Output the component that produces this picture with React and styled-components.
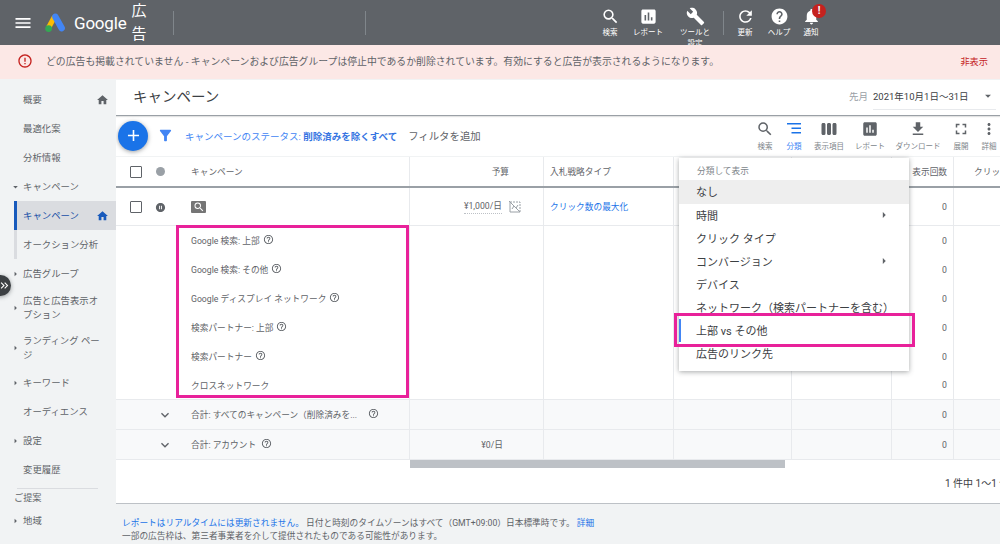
import styled, { createGlobalStyle } from 'styled-components';
import {
  MdMenu, MdSearch, MdAssessment, MdBuild, MdRefresh, MdHelp, MdNotifications, MdErrorOutline,
  MdHome, MdArrowRight, MdArrowDropDown, MdAdd, MdFilterAlt, MdViewWeek,
  MdFileDownload, MdFullscreen, MdMoreVert, MdExpandMore, MdHelpOutline, MdPauseCircleFilled,
  MdKeyboardDoubleArrowRight,
} from 'react-icons/md';

const GlobalStyle = createGlobalStyle`
  html, body {
    margin: 0;
    padding: 0;
    width: 1000px;
    height: 544px;
    overflow: hidden;
    background: #fff;
  }
  * { box-sizing: border-box; }
  body {
    font-family: Roboto, "Noto Sans CJK JP", sans-serif;
    color: #5f6368;
  }
`;

const Page = styled.div`
  width: 1000px;
  height: 544px;
  display: flex;
  flex-direction: column;
  overflow: hidden;
`;

const TopBar = styled.header`
  height: 45px;
  flex: none;
  background: #5f6368;
  color: #fff;
  display: flex;
  align-items: center;
`;

const MenuButton = styled.div`
  width: 44px;
  padding-left: 13px;
  display: flex;
  font-size: 20px;
`;

const Brand = styled.div`
  width: 129px;
  display: flex;
  align-items: center;
`;

const BrandName = styled.span`
  font-size: 17px;
  margin-left: 8px;
  letter-spacing: -0.2px;
`;

const BrandSub = styled.span`
  width: 16px;
  margin-left: 5px;
  padding-top: 1px;
  font-size: 15px;
  line-height: 23px;
`;

const BarDivider = styled.span`
  width: 1px;
  height: 24px;
  flex: none;
  background: #80868b;
`;

const BarGap = styled.div`
  width: ${p => p.$w}px;
  flex: none;
`;

const BarTool = styled.div`
  width: ${p => p.$w}px;
  height: 45px;
  flex: none;
  padding-top: 7px;
  display: flex;
  flex-direction: column;
  align-items: center;
  position: relative;
  font-size: 7.5px;
  line-height: 11px;
  text-align: center;
  svg { font-size: 19px; margin-bottom: 1px; flex: none; }
`;

const Badge = styled.span`
  position: absolute;
  top: 4px;
  right: 0;
  width: 14px;
  height: 14px;
  border-radius: 50%;
  background: #c5221f;
  font-size: 10px;
  line-height: 14px;
  font-weight: 700;
`;

const AlertBar = styled.div`
  height: 35px;
  flex: none;
  background: #fce8e6;
  border-bottom: 1px solid #f1f3f4;
  display: flex;
  align-items: center;
  padding: 0 12px 2px 17px;
  font-size: 9.85px;
  position: relative;
  svg { font-size: 16px; color: #c5221f; margin-right: 13px; }
`;

const AlertText = styled.span`
  flex: 1;
`;

const AlertAction = styled.span`
  font-size: 9.2px;
  color: #c5221f;
`;

const Body = styled.div`
  flex: 1;
  min-height: 0;
  display: flex;
  position: relative;
`;

const Sidebar = styled.nav`
  width: 116px;
  flex: none;
  background: #f1f3f4;
  padding-top: 5px;
  font-size: 9.4px;
`;

const NavItem = styled.div`
  min-height: ${p => (p.$tall ? 40 : 29)}px;
  margin-left: ${p => (p.$sub ? 14 : 0)}px;
  padding-left: ${p => (p.$sub ? 9 : 23)}px;
  padding-right: ${p => (p.$sub ? 4 : 14)}px;
  display: flex;
  align-items: center;
  position: relative;
  line-height: 14px;
  color: ${p => (p.$active ? '#174ea6' : '#5f6368')};
  background: ${p => (p.$active ? '#dadce0' : 'transparent')};
  box-shadow: ${p => (p.$active ? 'inset 3px 0 #185abc' : p.$sub ? 'inset 3px 0 #dadce0' : 'none')};
`;

const NavCaret = styled.span`
  position: absolute;
  left: 10px;
  top: 50%;
  transform: translateY(-50%);
  display: flex;
  font-size: 11px;
`;

const NavHome = styled.span`
  position: absolute;
  right: 7px;
  top: 50%;
  transform: translateY(-50%);
  display: flex;
  font-size: 13px;
  color: ${p => (p.$active ? '#185abc' : '#5f6368')};
`;

const NavRule = styled.div`
  height: 1px;
  margin: 4px 18px 0 17px;
  background: #dadce0;
`;

const NavHeading = styled.div`
  padding: 2px 0 0 14px;
  height: 17px;
  font-size: 9.2px;
  line-height: 13px;
`;

const Expander = styled.div`
  position: absolute;
  left: -10px;
  top: 195px;
  width: 21px;
  height: 21px;
  border-radius: 50%;
  background: #3c4043;
  color: #fff;
  display: flex;
  align-items: center;
  justify-content: flex-end;
  font-size: 13px;
  box-shadow: 0 1px 4px rgba(60, 64, 67, 0.5);
  z-index: 5;
`;

const Main = styled.main`
  flex: 1;
  min-width: 0;
  display: flex;
  flex-direction: column;
  position: relative;
  overflow: hidden;
`;

const TitleBar = styled.div`
  height: 36px;
  flex: none;
  display: flex;
  align-items: flex-start;
  padding: 0 4px 0 17px;
  border-bottom: 1px solid #9aa0a6;
  box-shadow: 0 1px 1px rgba(60, 64, 67, 0.15);
`;

const Title = styled.h1`
  flex: 1;
  margin: 0;
  font-size: 14.5px;
  line-height: 36px;
  font-weight: 400;
  color: #3c4043;
`;

const DateRange = styled.div`
  width: 147px;
  height: 30px;
  position: relative;
  display: flex;
  align-items: center;
  padding-top: 1px;
  font-size: 9.5px;
  color: #3c4043;
  svg { font-size: 14px; color: #5f6368; margin-left: auto; margin-right: 1px; }
`;

const DateLabel = styled.span`
  color: #9aa0a6;
  margin-right: 5px;
`;

const DateUnderline = styled.span`
  position: absolute;
  left: 24px;
  right: 0;
  bottom: 0;
  height: 1px;
  background: #e8eaed;
`;

const Toolbar = styled.div`
  height: 40px;
  flex: none;
  display: flex;
  align-items: center;
  padding-bottom: 1px;
  font-size: 9.5px;
  position: relative;
`;

const AddButton = styled.div`
  width: 30px;
  height: 30px;
  margin: 0 0 0 2px;
  border-radius: 50%;
  background: #1a73e8;
  color: #fff;
  display: flex;
  align-items: center;
  justify-content: center;
  font-size: 19px;
  box-shadow: 0 1px 4px rgba(60, 64, 67, 0.5);
`;

const FilterIcon = styled.span`
  display: flex;
  margin-left: 9px;
  color: #4285f4;
  font-size: 17px;
`;

const FilterText = styled.span`
  margin-left: 11px;
  color: #4285f4;
  b { font-weight: 700; color: #3574e2; }
`;

const AddFilter = styled.span`
  margin-left: 11px;
  font-size: 10.4px;
  color: #5f6368;
`;

const ToolGroup = styled.div`
  margin-left: auto;
  margin-right: -2px;
  height: 40px;
  align-self: flex-start;
  display: flex;
`;

const Tool = styled.div`
  width: ${p => p.$w}px;
  display: flex;
  flex-direction: column;
  align-items: center;
  padding-top: 4px;
  white-space: nowrap;
  font-size: 7.5px;
  color: ${p => (p.$on ? '#4285f4' : '#80868b')};
  svg {
    font-size: 18px;
    margin-bottom: 2px;
    color: ${p => (p.$on ? '#1a73e8' : '#5f6368')};
  }
`;

const Table = styled.div`
  flex: none;
  border-top: 1px solid #f1f3f4;
  font-size: 8.7px;
`;

const Row = styled.div`
  height: ${p => p.$h}px;
  display: grid;
  grid-template-columns: 294px 134px 130px 118px 100px 62px 46px;
  background: ${p => (p.$total ? '#f8f9fa' : '#fff')};
  border-bottom: ${p => (p.$strong ? '2px solid #9aa0a6' : p.$plain ? 'none' : '1px solid #e8eaed')};
`;

const Cell = styled.div`
  display: flex;
  align-items: center;
  justify-content: ${p => (p.$right ? 'flex-end' : 'flex-start')};
  padding: 0 ${p => p.$pr ?? 0}px 0 ${p => p.$pl ?? 0}px;
  border-right: ${p => (p.$last ? 'none' : '1px solid #e8eaed')};
  white-space: nowrap;
  overflow: hidden;
  color: ${p => (p.$link ? '#1a73e8' : '#5f6368')};
`;

const NameCell = styled.div`
  display: grid;
  grid-template-columns: 40px 35px 1fr;
  align-items: center;
  border-right: 1px solid #e8eaed;
  white-space: nowrap;
  overflow: hidden;
`;

const CheckBox = styled.span`
  width: 12px;
  height: 12px;
  margin-left: 14px;
  border: 1.5px solid #5f6368;
  border-radius: 1px;
  background: #fff;
`;

const StatusDot = styled.span`
  width: 9px;
  height: 9px;
  border-radius: 50%;
  background: #9aa0a6;
`;

const PauseIcon = styled.span`
  display: flex;
  margin-left: -1px;
  margin-top: 1px;
  font-size: 11px;
  color: #5f6368;
`;

const ExpandIcon = styled.span`
  display: flex;
  justify-content: flex-end;
  font-size: 16px;
  color: #5f6368;
  grid-column: 1 / span 2;
  padding-right: 18px;
`;

const TypeChip = styled.span`
  width: 15px;
  height: 12px;
  background: #757575;
  border-radius: 1px;
  color: #fff;
  display: flex;
  align-items: center;
  justify-content: center;
  font-size: 12px;
`;

const Segment = styled.span`
  display: flex;
  align-items: center;
  gap: ${p => p.$gap ?? 3}px;
  svg { font-size: 11px; margin-top: -3px; color: #5f6368; }
`;

const Budget = styled.span`
  border-bottom: 1px dotted #bdc1c6;
  line-height: 14px;
`;

const BudgetIcon = styled.svg`
  width: 13px;
  height: 13px;
  margin-left: 6px;
  flex: none;
`;

const Scrollbar = styled.div`
  height: 8px;
  flex: none;
  margin-left: 294px;
  width: 375px;
  background: #bdc1c6;
`;

const Pagination = styled.div`
  height: 35px;
  flex: none;
  padding: 7px 0 0 829px;
  font-size: 10px;
  white-space: nowrap;
  color: #3c4043;
`;

const Footer = styled.footer`
  flex: 1;
  background: #f1f3f4;
  border-top: 1.5px solid #bdc1c6;
  padding: 13px 0 0 6px;
  font-size: 8.7px;
  line-height: 13px;
  white-space: nowrap;
  a { color: #1a73e8; }
`;

const SegmentHighlight = styled.div`
  position: absolute;
  left: 60px;
  top: 145px;
  width: 233px;
  height: 173px;
  border: 3px solid #e8219a;
  pointer-events: none;
  z-index: 3;
`;

const Menu = styled.div`
  position: absolute;
  left: 563px;
  top: 78px;
  width: 230px;
  height: 213px;
  background: #fff;
  box-shadow: 0 1px 5px rgba(60, 64, 67, 0.45);
  font-size: 11px;
  color: #3c4043;
  z-index: 2;
`;

const MenuHeading = styled.div`
  height: 22px;
  padding: 7px 0 0 18px;
  font-size: 8.7px;
  line-height: 12px;
  color: #80868b;
`;

const MenuItem = styled.div`
  height: ${p => (p.$h ? p.$h : 23)}px;
  padding: 0 22px 2px 17px;
  display: flex;
  align-items: center;
  justify-content: space-between;
  white-space: nowrap;
  background: ${p => (p.$on ? '#eeeeee' : 'transparent')};
  box-shadow: ${p => (p.$mark ? 'inset 2px 0 #4285f4' : 'none')};
  svg { font-size: 14px; color: #5f6368; margin-right: -4px; }
`;

const MenuHighlight = styled.div`
  position: absolute;
  left: 558px;
  top: 233px;
  width: 241px;
  height: 34px;
  border: 3px solid #e8219a;
  pointer-events: none;
  z-index: 4;
`;

const navItems = [
  { label: '概要', home: true },
  { label: '最適化案' },
  { label: '分析情報' },
  { label: 'キャンペーン', caret: 'down' },
  { label: 'キャンペーン', sub: true, active: true, home: true },
  { label: 'オークション分析', sub: true },
  { label: '広告グループ', caret: 'right' },
  { label: '広告と広告表示オプション', caret: 'right', tall: true },
  { label: 'ランディング ページ', caret: 'right', tall: true },
  { label: 'キーワード', caret: 'right' },
  { label: 'オーディエンス' },
  { label: '設定', caret: 'right' },
  { label: '変更履歴' },
];

const segments = [
  { name: 'Google 検索: 上部', help: true },
  { name: 'Google 検索: その他', help: true },
  { name: 'Google ディスプレイ ネットワーク', help: true },
  { name: '検索パートナー: 上部', help: true },
  { name: '検索パートナー', help: true },
  { name: 'クロスネットワーク' },
];

const menuItems = [
  { label: 'なし', on: true, h: 24 },
  { label: '時間', more: true },
  { label: 'クリック タイプ' },
  { label: 'コンバージョン', more: true },
  { label: 'デバイス' },
  { label: 'ネットワーク（検索パートナーを含む）' },
  { label: '上部 vs その他', mark: true },
  { label: '広告のリンク先' },
];

function NoBudgetIcon() {
  return (
    <BudgetIcon viewBox="0 0 13 13" fill="none" stroke="#9aa0a6" strokeWidth="1">
      <path d="M1 1l11 11M2 2v10h10M4 9l2-3 2 2 2-3" />
      <path d="M2 2h10v10" strokeDasharray="2 1" />
    </BudgetIcon>
  );
}

function AdsLogo() {
  return (
    <svg width="22" height="20" viewBox="0 0 22 20">
      <path d="M8.2 2.6 2.4 13.2l4.6 2.6 5.6-10.6z" fill="#fbbc04" />
      <path d="M13.9 1.7a3.3 3.3 0 0 0-5.7 1 3.3 3.3 0 0 0 .3 2.5l6.2 11.4a3.3 3.3 0 0 0 5.8-3.2z" fill="#4285f4" />
      <circle cx="4.6" cy="15.6" r="3.4" fill="#34a853" />
    </svg>
  );
}

function SegmentIcon() {
  return (
    <svg width="18" height="18" viewBox="0 0 18 18" fill="currentColor">
      <path d="M2 3h14v1.5H2zM6.5 7.5H16V9H6.5zM6.5 12H16v1.5H6.5z" />
    </svg>
  );
}

function ZeroCells({ budget }) {
  return (
    <>
      <Cell $right $pr={40}>{budget}</Cell>
      <Cell />
      <Cell />
      <Cell />
      <Cell $right $pr={6}>0</Cell>
      <Cell $last />
    </>
  );
}

export default function App() {
  return (
    <Page>
      <GlobalStyle />
      <TopBar>
        <MenuButton><MdMenu /></MenuButton>
        <Brand>
          <AdsLogo />
          <BrandName>Google</BrandName>
          <BrandSub>広告</BrandSub>
        </Brand>
        <BarDivider />
        <BarGap $w={191} />
        <BarDivider />
        <BarGap $w={225} />
        <BarTool $w={38}><MdSearch />検索</BarTool>
        <BarTool $w={38}><MdAssessment />レポート</BarTool>
        <BarTool $w={56}><MdBuild />ツールと<br />設定</BarTool>
        <BarDivider />
        <BarGap $w={4} />
        <BarTool $w={34}><MdRefresh />更新</BarTool>
        <BarTool $w={34}><MdHelp />ヘルプ</BarTool>
        <BarTool $w={30}>
          <MdNotifications />通知
          <Badge>!</Badge>
        </BarTool>
      </TopBar>

      <AlertBar>
        <MdErrorOutline />
        <AlertText>どの広告も掲載されていません - キャンペーンおよび広告グループは停止中であるか削除されています。有効にすると広告が表示されるようになります。</AlertText>
        <AlertAction>非表示</AlertAction>
      </AlertBar>

      <Body>
        <Sidebar>
          {navItems.map((item, i) => (
            <NavItem key={i} $sub={item.sub} $active={item.active} $tall={item.tall}>
              {item.caret && (
                <NavCaret>{item.caret === 'down' ? <MdArrowDropDown /> : <MdArrowRight />}</NavCaret>
              )}
              {item.label}
              {item.home && <NavHome $active={item.active}><MdHome /></NavHome>}
            </NavItem>
          ))}
          <NavRule />
          <NavHeading>ご提案</NavHeading>
          <NavItem>
            <NavCaret><MdArrowRight /></NavCaret>
            地域
          </NavItem>
        </Sidebar>
        <Expander><MdKeyboardDoubleArrowRight /></Expander>

        <Main>
          <TitleBar>
            <Title>キャンペーン</Title>
            <DateRange>
              <DateLabel>先月</DateLabel>
              2021年10月1日～31日
              <MdArrowDropDown />
              <DateUnderline />
            </DateRange>
          </TitleBar>

          <Toolbar>
            <AddButton><MdAdd /></AddButton>
            <FilterIcon><MdFilterAlt /></FilterIcon>
            <FilterText>キャンペーンのステータス: <b>削除済みを除くすべて</b></FilterText>
            <AddFilter>フィルタを追加</AddFilter>
            <ToolGroup>
              <Tool $w={30}><MdSearch />検索</Tool>
              <Tool $w={28} $on><SegmentIcon />分類</Tool>
              <Tool $w={42}><MdViewWeek />表示項目</Tool>
              <Tool $w={40}><MdAssessment />レポート</Tool>
              <Tool $w={56}><MdFileDownload />ダウンロード</Tool>
              <Tool $w={30}><MdFullscreen />展開</Tool>
              <Tool $w={26}><MdMoreVert />詳細</Tool>
            </ToolGroup>
          </Toolbar>

          <Table>
            <Row $h={31} $strong>
              <NameCell>
                <CheckBox />
                <StatusDot />
                キャンペーン
              </NameCell>
              <Cell $right $pr={34}>予算</Cell>
              <Cell $pl={6}>入札戦略タイプ</Cell>
              <Cell />
              <Cell />
              <Cell $right $pr={6}>表示回数</Cell>
              <Cell $last $pl={20}>クリック数</Cell>
            </Row>
            <Row $h={38}>
              <NameCell>
                <CheckBox />
                <PauseIcon><MdPauseCircleFilled /></PauseIcon>
                <TypeChip><MdSearch /></TypeChip>
              </NameCell>
              <Cell $right $pr={22}>
                <Budget>¥1,000/日</Budget>
                <NoBudgetIcon />
              </Cell>
              <Cell $pl={6} $link>クリック数の最大化</Cell>
              <Cell />
              <Cell />
              <Cell $right $pr={6}>0</Cell>
              <Cell $last />
            </Row>
            {segments.map((seg, i) => (
              <Row key={seg.name} $h={29} $plain={i !== 5}>
                <NameCell>
                  <span />
                  <span />
                  <Segment>
                    {seg.name}
                    {seg.help && <MdHelpOutline />}
                  </Segment>
                </NameCell>
                <ZeroCells />
              </Row>
            ))}
            <Row $h={30} $total>
              <NameCell>
                <ExpandIcon><MdExpandMore /></ExpandIcon>
                <Segment $gap={11}>
                  合計: すべてのキャンペーン（削除済みを...
                  <MdHelpOutline />
                </Segment>
              </NameCell>
              <ZeroCells />
            </Row>
            <Row $h={30} $total>
              <NameCell>
                <ExpandIcon><MdExpandMore /></ExpandIcon>
                <Segment $gap={5}>
                  合計: アカウント
                  <MdHelpOutline />
                </Segment>
              </NameCell>
              <ZeroCells budget="¥0/日" />
            </Row>
          </Table>
          <Scrollbar />
          <Pagination>1 件中 1～1 件を表示</Pagination>
          <Footer>
            <a>レポートはリアルタイムには更新されません。</a> 日付と時刻のタイムゾーンはすべて（GMT+09:00）日本標準時です。 <a>詳細</a>
            <br />
            一部の広告枠は、第三者事業者を介して提供されたものである可能性があります。
          </Footer>

          <SegmentHighlight />
          <Menu>
            <MenuHeading>分類して表示</MenuHeading>
            {menuItems.map(item => (
              <MenuItem key={item.label} $on={item.on} $mark={item.mark} $h={item.h}>
                {item.label}
                {item.more && <MdArrowRight />}
              </MenuItem>
            ))}
          </Menu>
          <MenuHighlight />
        </Main>
      </Body>
    </Page>
  );
}
